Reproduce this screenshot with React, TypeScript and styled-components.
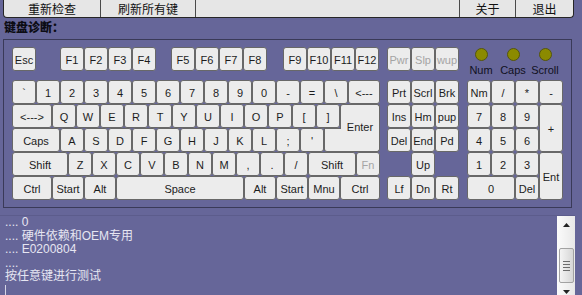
import React from 'react'
import styled, { createGlobalStyle } from 'styled-components'

const GlobalStyle = createGlobalStyle`
  html, body {
    margin: 0;
    padding: 0;
    background: #666699;
    overflow: hidden;
  }
  body {
    font-family: 'Liberation Sans', 'Noto Sans CJK SC', sans-serif;
  }
`

const Page = styled.main`
  width: 582px;
  height: 295px;
  display: flex;
  flex-direction: column;
  background: #666699;
`

const Toolbar = styled.nav`
  margin-left: 3px;
  width: 571px;
  height: 18px;
  box-sizing: border-box;
  display: flex;
  background: #e6e6e6;
  border: 1px solid #262626;
  border-top: none;
  border-radius: 0 0 4px 4px;
  font-family: 'Noto Sans CJK SC', sans-serif;
  font-size: 12px;
  color: #111;
`

const ToolButton = styled.div<{ $w: number; $last?: boolean }>`
  width: ${(p) => p.$w}px;
  flex: none;
  box-sizing: border-box;
  display: flex;
  align-items: center;
  justify-content: center;
  line-height: 17px;
  border-right: ${(p) => (p.$last ? 'none' : '1px solid #4a4a4a')};
`

const Title = styled.h1`
  margin: 1px 0 4px 4px;
  font-family: 'Noto Sans CJK SC', sans-serif;
  font-size: 12px;
  font-weight: 900;
  line-height: 16px;
  color: #0c0c14;
`

const Panel = styled.section`
  margin-left: 3px;
  width: 569px;
  height: 169px;
  box-sizing: border-box;
  border: 1px solid #3a3a58;
  padding: 7px 0 0 8px;
  display: flex;
  font-size: 11px;
`

const MainBlock = styled.div`
  width: 368px;
  display: flex;
  flex-direction: column;
`

const Row = styled.div<{ $gapAfter?: number }>`
  display: flex;
  height: 24px;
  margin-bottom: ${(p) => p.$gapAfter ?? 0}px;
`

const Key = styled.div<{ $w?: number; $h?: number; $muted?: boolean; $ml?: number }>`
  box-sizing: border-box;
  width: ${(p) => p.$w ?? 24}px;
  height: ${(p) => p.$h ?? 24}px;
  flex: none;
  margin-left: ${(p) => p.$ml ?? 0}px;
  border: 1px solid #686868;
  border-radius: 3px;
  background: #ececec;
  color: ${(p) => (p.$muted ? '#a4a4a4' : '#1c1c1c')};
  display: flex;
  align-items: center;
  justify-content: center;
  padding-top: 2px;
  white-space: nowrap;
`

const EnterTop = styled(Key)`
  position: relative;
  z-index: 1;
  border-bottom: none;
  border-radius: 3px 3px 0 0;
  align-items: flex-start;
  padding-top: 16px;
  overflow: visible;
`

const EnterBottom = styled(Key)`
  position: relative;
  border-top: none;
  border-radius: 0 0 3px 3px;
  &::before {
    content: '';
    position: absolute;
    left: -1px;
    top: 0;
    width: 17px;
    height: 1px;
    background: #686868;
  }
`

const NavBlock = styled.div`
  margin-left: 7px;
  display: flex;
  flex-direction: column;
`

const KeyGrid = styled.div<{ $cols: number }>`
  display: grid;
  grid-template-columns: repeat(${(p) => p.$cols}, 24px);
  grid-auto-rows: 24px;
`

const GridKey = styled(Key)<{ $col?: string; $row?: string }>`
  width: auto;
  height: auto;
  grid-column: ${(p) => p.$col ?? 'auto'};
  grid-row: ${(p) => p.$row ?? 'auto'};
`

const RightBlock = styled.div`
  margin-left: 8px;
  display: flex;
  flex-direction: column;
`

const LedRow = styled.div`
  height: 33px;
  display: flex;
  margin-left: -2px;
`

const Led = styled.div`
  width: 32px;
  display: flex;
  flex-direction: column;
  align-items: center;
  color: #111122;
  font-size: 11px;
  line-height: 12px;
  span:first-child {
    width: 13px;
    height: 13px;
    box-sizing: border-box;
    margin-top: 1px;
    margin-bottom: 3px;
    border-radius: 50%;
    background: #8b8a00;
    border: 1px solid #55550c;
  }
`

const LogArea = styled.section`
  margin-top: 7px;
  width: 575px;
  flex: 1;
  display: flex;
  border-top: 1px solid #5c5c8c;
  overflow: hidden;
`

const LogText = styled.div`
  flex: 1;
  padding: 0 0 0 5px;
  font-family: 'Liberation Sans', 'Noto Sans CJK SC', sans-serif;
  font-size: 12px;
  line-height: 13.5px;
  color: #e6e6f2;
`

const LogLine = styled.div`
  height: 13.5px;
  white-space: pre;
`

const Caret = styled.span`
  display: inline-block;
  width: 1px;
  height: 12px;
  margin-top: 1px;
  background: #d6d6e6;
`

const Scrollbar = styled.div`
  width: 18px;
  flex: none;
  display: flex;
  flex-direction: column;
  align-items: center;
  background: linear-gradient(90deg, #fbfbfb, #e8e8e8);
`

const ArrowButton = styled.div`
  width: 18px;
  height: 18px;
  flex: none;
  display: flex;
  align-items: center;
  justify-content: center;
`

const Thumb = styled.div`
  margin-top: 14px;
  width: 15px;
  height: 35px;
  box-sizing: border-box;
  flex: none;
  border: 1px solid #a2a2a2;
  border-radius: 2px;
  background: linear-gradient(90deg, #f4f4f4, #d6d6d6);
  display: flex;
  flex-direction: column;
  align-items: center;
  justify-content: center;
  gap: 2px;
  i {
    display: block;
    width: 7px;
    height: 1px;
    background: #6c6c6c;
  }
`

const Arrow = ({ up }: { up?: boolean }) => (
  <svg width="7" height="4" viewBox="0 0 7 4">
    <polygon points={up ? '3.5,0 7,4 0,4' : '0,0 7,0 3.5,4'} fill="#222" />
  </svg>
)

type K = [string, number?, boolean?]

const fRow: { label: string; ml?: number; muted?: boolean }[] = [
  { label: 'Esc' },
  { label: 'F1', ml: 24 },
  { label: 'F2' },
  { label: 'F3' },
  { label: 'F4' },
  { label: 'F5', ml: 15 },
  { label: 'F6' },
  { label: 'F7' },
  { label: 'F8' },
  { label: 'F9', ml: 16 },
  { label: 'F10' },
  { label: 'F11' },
  { label: 'F12' },
]

const numRow: K[] = [
  ['`'], ['1'], ['2'], ['3'], ['4'], ['5'], ['6'], ['7'], ['8'], ['9'], ['0'],
  ['-'], ['='], ['\\'], ['<---', 32],
]
const qRow: K[] = [
  ['<--->', 40], ['Q'], ['W'], ['E'], ['R'], ['T'], ['Y'], ['U'], ['I'], ['O'], ['P'], ['['], [']'],
]
const aRow: K[] = [
  ['Caps', 48], ['A'], ['S'], ['D'], ['F'], ['G'], ['H'], ['J'], ['K'], ['L'], [';'], ["'"],
]
const zRow: K[] = [
  ['Shift', 56], ['Z'], ['X'], ['C'], ['V'], ['B'], ['N'], ['M'], [','], ['.'], ['/'],
  ['Shift', 48], ['Fn', 24, true],
]
const ctrlRow: K[] = [
  ['Ctrl', 40], ['Start', 32], ['Alt', 32], ['Space', 128], ['Alt', 32], ['Start', 32],
  ['Mnu', 32], ['Ctrl', 40],
]

const renderKeys = (keys: K[]) =>
  keys.map(([label, w, muted], i) => (
    <Key key={i} $w={w} $muted={muted}>
      {label}
    </Key>
  ))

const navKeys: { label: string; col?: string }[] = [
  { label: 'Prt' }, { label: 'Scrl' }, { label: 'Brk' },
  { label: 'Ins' }, { label: 'Hm' }, { label: 'pup' },
  { label: 'Del' }, { label: 'End' }, { label: 'Pd' },
  { label: 'Up', col: '2' },
  { label: 'Lf', col: '1' }, { label: 'Dn' }, { label: 'Rt' },
]

const padKeys: { label: string; col?: string; row?: string }[] = [
  { label: 'Nm' }, { label: '/' }, { label: '*' }, { label: '-' },
  { label: '7', col: '1', row: '2' }, { label: '8', col: '2', row: '2' }, { label: '9', col: '3', row: '2' },
  { label: '+', col: '4', row: '2 / span 2' },
  { label: '4', col: '1', row: '3' }, { label: '5', col: '2', row: '3' }, { label: '6', col: '3', row: '3' },
  { label: '1', col: '1', row: '4' }, { label: '2', col: '2', row: '4' }, { label: '3', col: '3', row: '4' },
  { label: 'Ent', col: '4', row: '4 / span 2' },
  { label: '0', col: '1 / span 2', row: '5' }, { label: 'Del', col: '3', row: '5' },
]

const logLines = ['.... 0', '.... 硬件依赖和OEM专用', '.... E0200804', '....', '按任意键进行测试']

export default function App() {
  return (
    <Page>
      <GlobalStyle />
      <Toolbar>
        <ToolButton $w={97}>重新检查</ToolButton>
        <ToolButton $w={95}>刷新所有键</ToolButton>
        <ToolButton $w={264} />
        <ToolButton $w={56}>关于</ToolButton>
        <ToolButton $w={57} $last>
          退出
        </ToolButton>
      </Toolbar>
      <Title>键盘诊断：</Title>
      <Panel>
        <MainBlock>
          <Row $gapAfter={9}>
            {fRow.map((k) => (
              <Key key={k.label} $ml={k.ml}>
                {k.label}
              </Key>
            ))}
          </Row>
          <Row>{renderKeys(numRow)}</Row>
          <Row>
            {renderKeys(qRow)}
            <EnterTop $w={40}>Enter</EnterTop>
          </Row>
          <Row>
            {renderKeys(aRow)}
            <EnterBottom $w={56} />
          </Row>
          <Row>{renderKeys(zRow)}</Row>
          <Row>{renderKeys(ctrlRow)}</Row>
        </MainBlock>
        <NavBlock>
          <Row $gapAfter={9}>
            <Key $muted>Pwr</Key>
            <Key $muted>Slp</Key>
            <Key $muted>wup</Key>
          </Row>
          <KeyGrid $cols={3}>
            {navKeys.map((k) => (
              <GridKey key={k.label} $col={k.col}>
                {k.label}
              </GridKey>
            ))}
          </KeyGrid>
        </NavBlock>
        <RightBlock>
          <LedRow>
            {['Num', 'Caps', 'Scroll'].map((name) => (
              <Led key={name}>
                <span />
                <span>{name}</span>
              </Led>
            ))}
          </LedRow>
          <KeyGrid $cols={4}>
            {padKeys.map((k, i) => (
              <GridKey key={i} $col={k.col} $row={k.row}>
                {k.label}
              </GridKey>
            ))}
          </KeyGrid>
        </RightBlock>
      </Panel>
      <LogArea>
        <LogText>
          {logLines.map((line, i) => (
            <LogLine key={i}>{line}</LogLine>
          ))}
          <LogLine>
            <Caret />
          </LogLine>
        </LogText>
        <Scrollbar>
          <ArrowButton>
            <Arrow up />
          </ArrowButton>
          <Thumb>
            <i />
            <i />
            <i />
            <i />
          </Thumb>
          <ArrowButton>
            <Arrow />
          </ArrowButton>
        </Scrollbar>
      </LogArea>
    </Page>
  )
}
